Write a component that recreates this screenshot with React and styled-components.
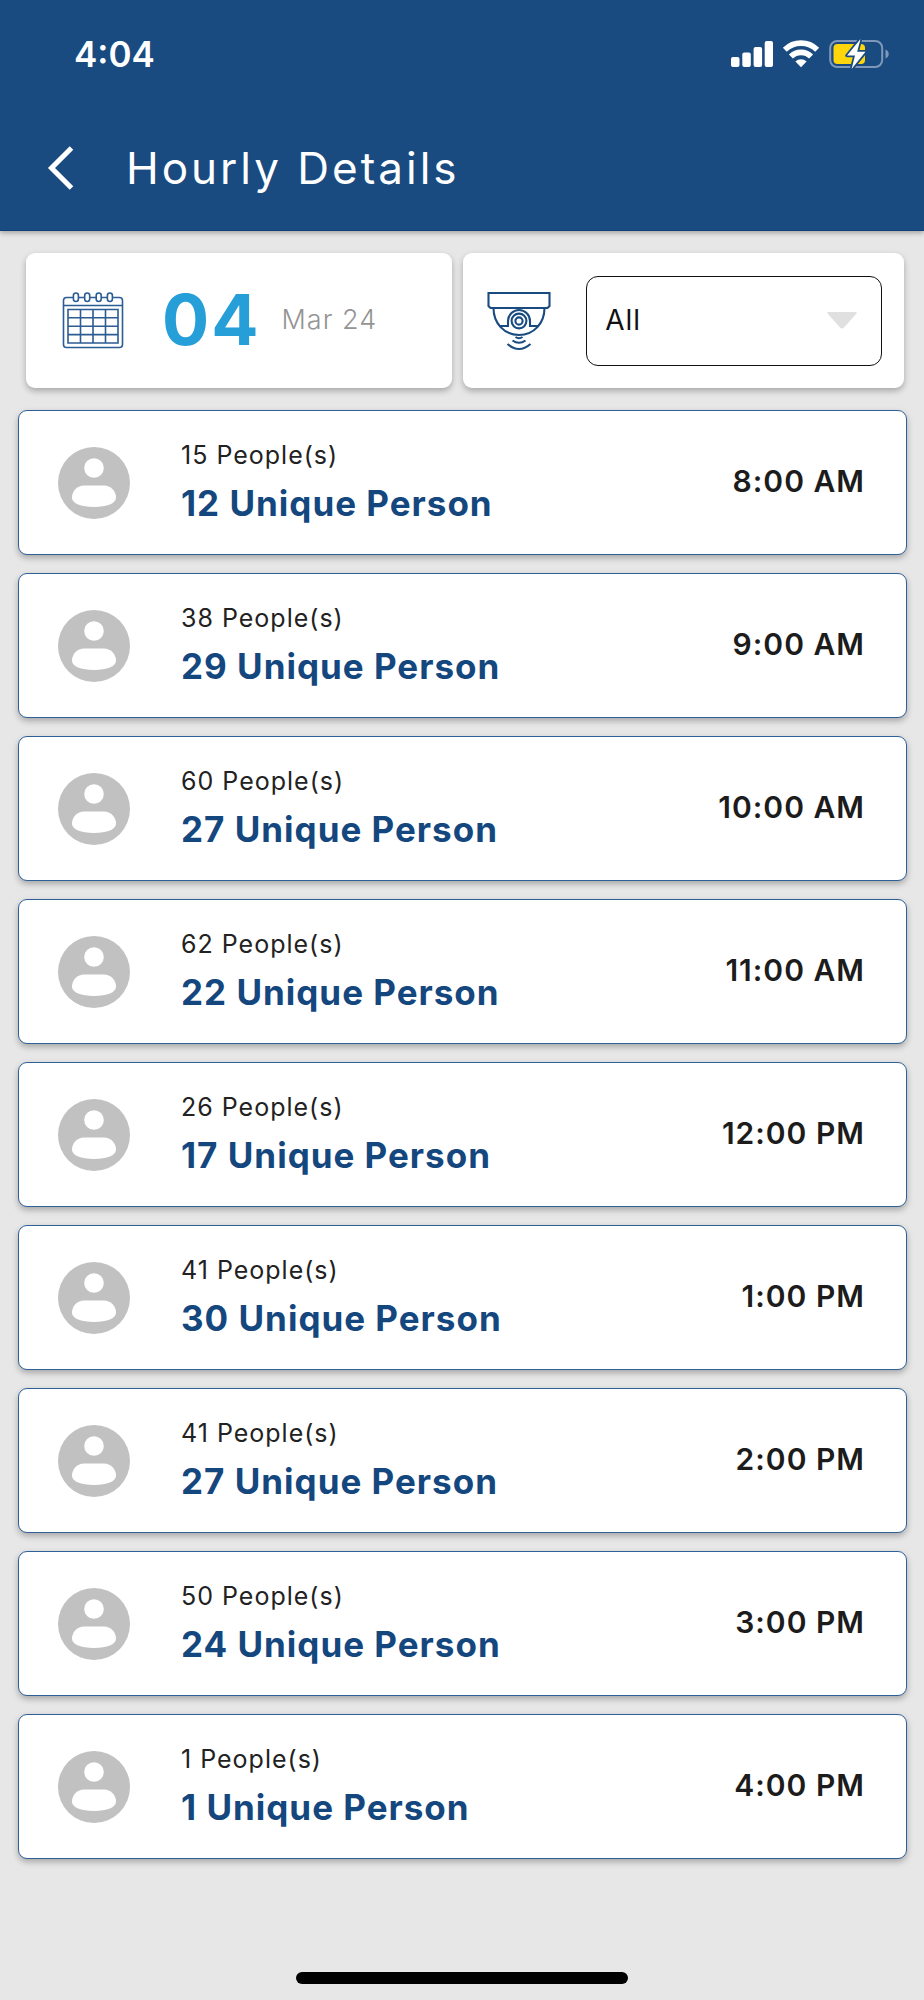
import React, { useState } from 'react';
import styled, { createGlobalStyle } from 'styled-components';

const hours = [
  { time: '8:00 AM', people: 15, unique: 12 },
  { time: '9:00 AM', people: 38, unique: 29 },
  { time: '10:00 AM', people: 60, unique: 27 },
  { time: '11:00 AM', people: 62, unique: 22 },
  { time: '12:00 PM', people: 26, unique: 17 },
  { time: '1:00 PM', people: 41, unique: 30 },
  { time: '2:00 PM', people: 41, unique: 27 },
  { time: '3:00 PM', people: 50, unique: 24 },
  { time: '4:00 PM', people: 1, unique: 1 },
];

const SignalIcon = () => (
  <svg width="42" height="28" viewBox="0 0 42 28" fill="#fff" aria-hidden="true">
    <rect x="0" y="17" width="8.5" height="10" rx="2" />
    <rect x="11.3" y="12.6" width="8.5" height="14.4" rx="2" />
    <rect x="22.6" y="7" width="8.5" height="20" rx="2" />
    <rect x="33.7" y="1" width="8.3" height="26" rx="2" />
  </svg>
);

const WifiIcon = () => (
  <svg width="38" height="28" viewBox="0 0 38 28" aria-hidden="true">
    <g fill="none" stroke="#fff" strokeWidth="5.6">
      <path d="M2.8 9.8a23 23 0 0 1 32.4 0" />
      <path d="M8.9 16.6a14.3 14.3 0 0 1 20.2 0" />
    </g>
    <path d="M19 27.2l-5.6-5.6a8 8 0 0 1 11.2 0z" fill="#fff" />
  </svg>
);

const BatteryIcon = () => (
  <svg width="60" height="30" viewBox="0 0 60 30" aria-hidden="true">
    <rect x="1.2" y="2" width="52" height="26" rx="7" fill="none" stroke="#8098b8" strokeWidth="2" />
    <path d="M56.5 10.5c2 .8 3.2 2.5 3.2 4.5s-1.2 3.7-3.2 4.5z" fill="#8098b8" />
    <rect x="4.5" y="5" width="31.5" height="20" rx="4" fill="#ffd60a" />
    <path
      d="M31.5 0L18 16.5h8L22.6 30 36.5 12.8h-8.3z"
      fill="#fff"
      stroke="#194b81"
      strokeWidth="3.5"
      strokeLinejoin="round"
      paintOrder="stroke"
    />
  </svg>
);

const BackIcon = () => (
  <svg width="28" height="44" viewBox="0 0 28 44" aria-hidden="true">
    <path d="M25.5 2L5.5 22l20 20" fill="none" stroke="#fff" strokeWidth="5" />
  </svg>
);

const CalendarIcon = () => (
  <svg width="62" height="58" viewBox="0 0 62 58" fill="none" stroke="#2b5c93" strokeWidth="1.6" aria-hidden="true">
    <rect x="1.5" y="6.5" width="59" height="50" rx="3" />
    <path d="M1.5 14.5h59" />
    <path d="M6 18.5h50V52H6zM6 26.8h50M6 35.2h50M6 43.6h50M18.5 18.5V52M31 18.5V52M43.5 18.5V52" />
    <g fill="#fff">
      <rect x="11.4" y="2" width="5" height="8.5" rx="2.5" />
      <rect x="22.7" y="2" width="5" height="8.5" rx="2.5" />
      <rect x="34.2" y="2" width="5" height="8.5" rx="2.5" />
      <rect x="45.4" y="2" width="5" height="8.5" rx="2.5" />
    </g>
  </svg>
);

const CameraIcon = () => (
  <svg width="64" height="60" viewBox="0 0 64 60" fill="none" stroke="#194b81" strokeWidth="2.1" aria-hidden="true">
    <path d="M1.5 2h61v13l-2 2h-57l-2-2z" />
    <path d="M6.5 17c0 15 10.5 27 25.5 27s25.5-12 25.5-27" />
    <path d="M12.5 35H21v-5a11 11 0 0 1 22 0v5h8.5" />
    <circle cx="32" cy="30" r="7.4" />
    <circle cx="32" cy="30" r="3.6" />
    <path d="M28.5 46q3.5 2.4 7 0M25.5 49.5q6.5 4.6 13 0M20.5 53q11.5 10 23 0" />
  </svg>
);

const PersonIcon = () => (
  <svg width="72" height="72" viewBox="0 0 72 72" aria-hidden="true">
    <circle cx="36" cy="36" r="36" fill="#c1c1c1" />
    <circle cx="36" cy="21" r="9.8" fill="#fff" />
    <path d="M26 38.5h20c6.5 0 12 5.5 12 12 0 6-9 9.5-22 9.5s-22-3.5-22-9.5c0-6.5 5.5-12 12-12z" fill="#fff" />
  </svg>
);

function App() {
  const [camera, setCamera] = useState('all');

  return (
    <Screen>
      <GlobalStyle />
      <Header>
        <StatusBar>
          <Clock>4:04</Clock>
          <StatusIcons>
            <SignalIcon />
            <WifiIcon />
            <BatteryIcon />
          </StatusIcons>
        </StatusBar>
        <NavBar>
          <BackButton type="button" aria-label="Back">
            <BackIcon />
          </BackButton>
          <Title>Hourly Details</Title>
        </NavBar>
      </Header>

      <Main>
        <Filters>
          <DateCard type="button">
            <CalendarIcon />
            <Day>04</Day>
            <Month>Mar 24</Month>
          </DateCard>
          <CameraCard>
            <CameraIcon />
            <SelectBox>
              <Select aria-label="Camera" value={camera} onChange={(e) => setCamera(e.target.value)}>
                <option value="all">All</option>
              </Select>
              <Arrow width="32" height="19" viewBox="0 0 32 19" aria-hidden="true">
                <path d="M2.5 1h27q2 .3.8 1.8L18 16.5q-2 1.8-4 0L1.7 2.8Q.5 1.3 2.5 1z" fill="#e0e0e0" />
              </Arrow>
            </SelectBox>
          </CameraCard>
        </Filters>

        <HourList>
          {hours.map((hour) => (
            <HourRow key={hour.time}>
              <PersonIcon />
              <Counts>
                <People>{hour.people} People(s)</People>
                <Unique>{hour.unique} Unique Person</Unique>
              </Counts>
              <Time>{hour.time}</Time>
            </HourRow>
          ))}
        </HourList>
      </Main>

      <HomeIndicator />
    </Screen>
  );
}

// Styled Components
const GlobalStyle = createGlobalStyle`
  * {
    box-sizing: border-box;
  }

  body {
    margin: 0;
    background-color: #e7e7e7;
    font-family: Inter, 'Liberation Sans', sans-serif;
  }

  svg {
    flex-shrink: 0;
    display: block;
  }
`;

const Screen = styled.div`
  min-height: 100vh;
  display: flex;
  flex-direction: column;
`;

const Header = styled.header`
  background-color: #194b81;
  color: #fff;
  border-bottom: 1px solid #123f73;
  box-shadow: 0 2px 5px rgba(0, 0, 0, 0.3);
`;

const StatusBar = styled.div`
  height: 108px;
  padding: 0 35px 0 74px;
  display: flex;
  justify-content: space-between;
  align-items: center;
`;

const Clock = styled.span`
  font-size: 35px;
  font-weight: 600;
`;

const StatusIcons = styled.div`
  display: flex;
  align-items: center;
  gap: 9px;
`;

const NavBar = styled.div`
  height: 122px;
  padding: 0 46px 2px;
  display: flex;
  align-items: center;
  gap: 52px;
`;

const BackButton = styled.button`
  padding: 0;
  border: none;
  background: none;
  cursor: pointer;
`;

const Title = styled.h1`
  margin: 0;
  font-size: 44px;
  font-weight: 400;
  letter-spacing: 3px;
`;

const Main = styled.main`
  flex: 1;
  padding: 22px 17px 0 18px;
`;

const Filters = styled.div`
  display: grid;
  grid-template-columns: 29fr 30fr;
  gap: 11px;
  margin: 0 3px 22px 8px;
`;

const Card = styled.div`
  height: 135px;
  background-color: #fff;
  border: none;
  border-radius: 9px;
  box-shadow: 0 3px 6px rgba(0, 0, 0, 0.28);
  display: flex;
  align-items: center;
`;

const DateCard = styled(Card).attrs({ as: 'button' })`
  padding: 0 36px 2px;
  font-family: inherit;
  cursor: pointer;
`;

const CameraCard = styled(Card)`
  padding: 0 22px 0 24px;
  gap: 35px;
`;

const Day = styled.span`
  margin-left: 38px;
  color: #269fd8;
  font-size: 70px;
  font-weight: 700;
  letter-spacing: 2px;
`;

const Month = styled.span`
  margin-left: 21px;
  color: #949494;
  font-size: 27px;
  font-weight: 300;
  letter-spacing: 1px;
`;

const SelectBox = styled.div`
  position: relative;
  flex: 1;
`;

const Select = styled.select`
  appearance: none;
  display: block;
  width: 100%;
  height: 90px;
  padding: 0 60px 2px 18px;
  border: 1px solid #111;
  border-radius: 12px;
  background-color: #fff;
  color: #111;
  font-family: inherit;
  font-size: 28px;
  font-weight: 400;
  letter-spacing: 1px;
`;

const Arrow = styled.svg`
  position: absolute;
  top: 35px;
  right: 24px;
  pointer-events: none;
`;

const HourList = styled.ul`
  margin: 0;
  padding: 0;
  list-style-type: none;
  display: flex;
  flex-direction: column;
  gap: 18px;
`;

const HourRow = styled.li`
  height: 145px;
  padding: 0 41px 0 39px;
  display: flex;
  align-items: center;
  background-color: #fff;
  border: 1px solid #2f6199;
  border-radius: 9px;
  box-shadow: 0 3px 6px rgba(0, 0, 0, 0.28);
`;

const Counts = styled.div`
  flex: 1;
  margin-left: 51px;
  padding-bottom: 4px;
  display: flex;
  flex-direction: column;
  gap: 8px;
`;

const People = styled.span`
  color: #222;
  font-size: 25px;
  line-height: 36px;
  font-weight: 400;
  letter-spacing: 1px;
`;

const Unique = styled.span`
  color: #15477f;
  font-size: 35px;
  line-height: 44px;
  font-weight: 700;
  letter-spacing: 1px;
`;

const Time = styled.span`
  padding-bottom: 4px;
  color: #1c1c1c;
  font-size: 30px;
  font-weight: 600;
  letter-spacing: 1px;
`;

const HomeIndicator = styled.div`
  width: 36%;
  height: 12px;
  margin: 0 auto 16px;
  border-radius: 6px;
  background-color: #000;
`;

export default App;
